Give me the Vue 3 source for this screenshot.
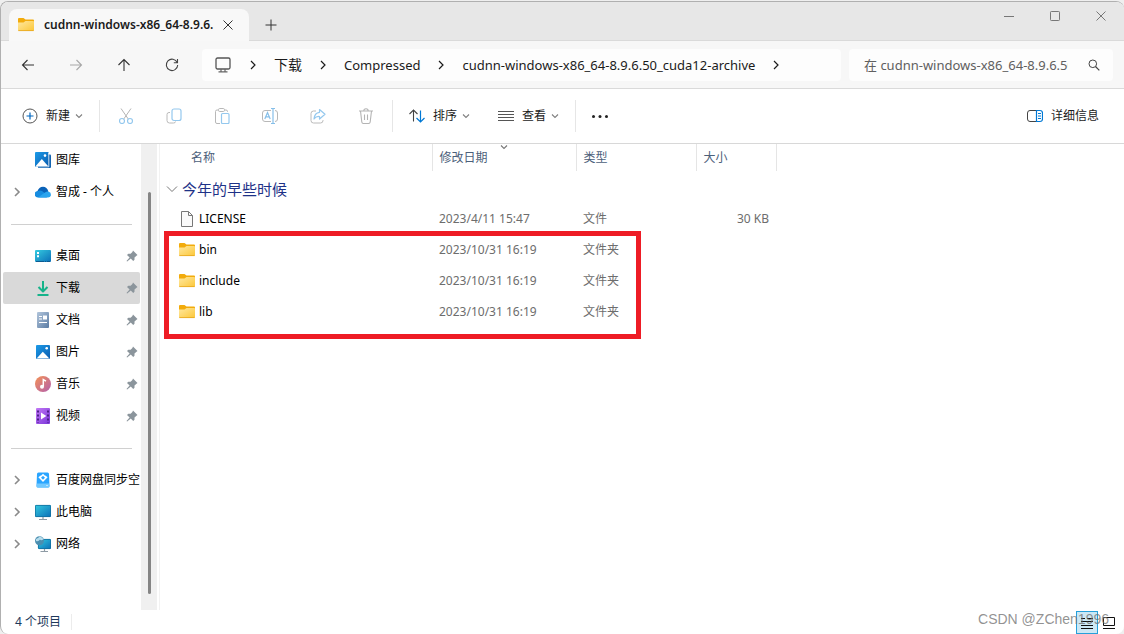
<script setup>
const quickItems = [
  { label: '图库', icon: 'gallery' },
  { label: '智成 - 个人', icon: 'cloud', expandable: true },
  { divider: true },
  { label: '桌面', icon: 'desktop', pinned: true },
  { label: '下载', icon: 'download', pinned: true, active: true },
  { label: '文档', icon: 'document', pinned: true },
  { label: '图片', icon: 'picture', pinned: true },
  { label: '音乐', icon: 'music', pinned: true },
  { label: '视频', icon: 'video', pinned: true },
  { divider: true },
  { label: '百度网盘同步空', icon: 'baidu', expandable: true },
  { label: '此电脑', icon: 'computer', expandable: true },
  { label: '网络', icon: 'network', expandable: true },
]

const crumbs = ['下载', 'Compressed', 'cudnn-windows-x86_64-8.9.6.50_cuda12-archive']

const fileActions = [
  { icon: 'cut', label: '剪切' },
  { icon: 'copy', label: '复制' },
  { icon: 'paste', label: '粘贴' },
  { icon: 'rename', label: '重命名' },
  { icon: 'share', label: '共享' },
  { icon: 'trash', label: '删除' },
]

const files = [
  { name: 'LICENSE', icon: 'file', date: '2023/4/11 15:47', type: '文件', size: '30 KB' },
  { name: 'bin', icon: 'folder', date: '2023/10/31 16:19', type: '文件夹', size: '' },
  { name: 'include', icon: 'folder', date: '2023/10/31 16:19', type: '文件夹', size: '' },
  { name: 'lib', icon: 'folder', date: '2023/10/31 16:19', type: '文件夹', size: '' },
]
</script>

<template>
  <div class="desktop">
    <svg class="sprite" aria-hidden="true">
      <defs>
        <linearGradient id="g-folder" x1="0" y1="0" x2="1" y2="1">
          <stop offset="0" stop-color="#ffe8a0" /><stop offset="1" stop-color="#fcc738" />
        </linearGradient>
        <linearGradient id="g-blue" x1="0" y1="0" x2="1" y2="1">
          <stop offset="0" stop-color="#1c9be8" /><stop offset="1" stop-color="#0a5cb0" />
        </linearGradient>
        <linearGradient id="g-teal" x1="0" y1="0" x2="1" y2="1">
          <stop offset="0" stop-color="#35cbe0" /><stop offset="1" stop-color="#0b6fb8" />
        </linearGradient>
        <linearGradient id="g-doc" x1="0" y1="0" x2="1" y2="1">
          <stop offset="0" stop-color="#b3c6dc" /><stop offset="1" stop-color="#5a7ba3" />
        </linearGradient>
        <linearGradient id="g-music" x1="0" y1="0" x2="1" y2="1">
          <stop offset="0" stop-color="#f59254" /><stop offset="1" stop-color="#b25fae" />
        </linearGradient>
        <linearGradient id="g-video" x1="0" y1="0" x2="1" y2="1">
          <stop offset="0" stop-color="#c278f5" /><stop offset="1" stop-color="#7a35d8" />
        </linearGradient>
      </defs>
      <symbol id="folder" viewBox="0 0 16 16">
        <path d="M0 2Q0 1 1 1H5.5L7.5 2.5H15Q16 2.5 16 3.5V9H0Z" fill="#f2ab0c" />
        <path d="M0 5.500H5.500L7.500 4H15.200Q16 4 16 5V13Q16 14 15 14H1Q0 14 0 13Z" fill="url(#g-folder)" />
        <path d="M.3 13.600H15.700" stroke="#e6a51a" stroke-width=".8" />
      </symbol>
      <symbol id="file" viewBox="0 0 16 16">
        <path d="M2.500.500H9.500L13.500 4.500V15.500H2.500Z" fill="#fafafa" stroke="#787878" />
        <path d="M9.500.500V4.500H13.500" fill="none" stroke="#787878" />
      </symbol>
      <symbol id="gallery" viewBox="0 0 16 16">
        <path d="M3 2.5H15Q16 2.5 16 3.5V15Q16 16 15 16H3Z" fill="#1263b0" />
        <path d="M0 1Q0 0 1 0H13.5V14.5H0Z" fill="url(#g-blue)" />
        <path d="M13.8 1V14.8H1" stroke="#fff" stroke-width=".8" fill="none" />
        <path d="M.8 14L6.8 7L13 14Z" fill="#fff" /><circle cx="10" cy="3.6" r="1.3" fill="#fff" />
      </symbol>
      <symbol id="cloud" viewBox="0 0 16 16">
        <path d="M2 8Q4 2.8 8 2.8Q12 2.8 13.4 7.5L9 11Z" fill="#0a62b8" />
        <path d="M3 13.4A3.2 3.2 0 0 1 2.8 7Q6 5.6 9 8.5L12 13.4Z" fill="#168ce0" />
        <path d="M3 13.4L10 8.4Q13 6.4 15 8.6Q16.2 10 15.8 11.7Q15.2 13.4 13 13.4Z" fill="#2aa4ee" />
      </symbol>
      <symbol id="desktop" viewBox="0 0 16 16">
        <rect y="2" width="16" height="12" rx="1" fill="url(#g-teal)" />
        <path d="M2 4H4V6H2ZM2 7.2H4V9.2H2Z" fill="#fff" />
        <path d="M1 13.5H15" stroke="#0d5b90" stroke-dasharray="8 1 1 1" />
      </symbol>
      <symbol id="download" viewBox="0 0 16 16">
        <path d="M8 1V11M3.5 7L8 11.5L12.5 7M2.5 15H13.5" fill="none" stroke="#16b38a" stroke-width="2" stroke-linejoin="round" />
      </symbol>
      <symbol id="document" viewBox="0 0 16 16">
        <rect x="2" width="12" height="16" rx="1" fill="url(#g-doc)" />
        <path d="M4 4.500H7M4 7H7M4 10.500H12" stroke="#fff" stroke-width="1.200" />
        <path d="M8 3.500H12V7.500H8Z" fill="#fff" />
      </symbol>
      <symbol id="picture" viewBox="0 0 16 16">
        <rect x="1" y="1" width="14" height="14" rx="1" fill="url(#g-blue)" />
        <path d="M1.6 14.5L7.8 7.8L14.4 14.5Z" fill="#fff" /><circle cx="11.7" cy="4.3" r="1.3" fill="#fff" />
      </symbol>
      <symbol id="music" viewBox="0 0 16 16">
        <circle cx="8" cy="8" r="8" fill="url(#g-music)" />
        <circle cx="7" cy="10.8" r="2" fill="#fff" /><path d="M8.3 10.5V3.6L11 5.2" stroke="#fff" stroke-width="1.5" fill="none" />
      </symbol>
      <symbol id="video" viewBox="0 0 16 16">
        <rect x="1" width="14" height="16" rx="1" fill="url(#g-video)" />
        <path d="M3 2.5V15M13 2.5V15" stroke="#4d2087" stroke-width="2" stroke-dasharray="2 2" />
        <path d="M6 4.5V11.5L11.3 8Z" fill="#fff" />
      </symbol>
      <symbol id="baidu" viewBox="0 0 16 16">
        <path d="M2 2Q2 .5 3.5 .5H12.5Q14 .5 14 2L14.5 14Q14.5 15.5 13 15.5H3Q1.5 15.5 1.5 14Z" fill="#2aa5ff" />
        <path d="M2 11.5H14L14.5 14Q14.5 15.5 13 15.5H3Q1.5 15.5 1.5 14Z" fill="#70c8ff" />
        <path d="M8 2.8L11 5.8L8 8.8L5 5.8Z" fill="none" stroke="#fff" stroke-width="1.6" />
        <path d="M3.8 5.8L6 4M12.2 5.8L10 4" stroke="#fff" stroke-width="1.2" />
        <path d="M11.5 13.5H12.5" stroke="#fff" />
      </symbol>
      <symbol id="computer" viewBox="0 0 16 16">
        <rect y="1" width="16" height="12" rx="1" fill="url(#g-teal)" />
        <path d="M8 13V15.5M4 15.5H12" stroke="#8e9ba5" stroke-width="1.2" />
        <rect x=".4" y="1.4" width="15.2" height="11.2" rx=".8" fill="none" stroke="#136f9d" stroke-width=".8" />
      </symbol>
      <symbol id="network" viewBox="0 0 16 16">
        <rect x="3" y="3" width="13" height="10" rx="1" fill="url(#g-teal)" />
        <rect x="3.400" y="3.400" width="12.200" height="9.200" rx=".8" fill="none" stroke="#136f9d" stroke-width=".8" />
        <path d="M9.500 13V15.500M5.500 15.500H13" stroke="#8e9ba5" stroke-width="1.2" />
        <circle cx="4.500" cy="4.800" r="4.500" fill="#4b8eb0" />
        <path d="M1 3Q4 2 4.500 .6Q7.500 1 8.500 3.300Q6 5 5 3.600Q3.500 6 1 5Z" fill="#b5dcec" />
      </symbol>
      <symbol id="pin" viewBox="0 0 12 12">
        <path d="M7 .5L11.5 5L10.500 5.800L8.500 7.600V9.800L7.200 11L4.800 8.600L1.200 11.600L.5 11L3.600 7.400L1 5L2.300 3.700H4.600L6.400 2Z" fill="#8b959c" />
      </symbol>
      <symbol id="chevron-right" viewBox="0 0 10 10">
        <path d="M3 1L7 5L3 9" fill="none" stroke="currentColor" stroke-width="1.2" />
      </symbol>
      <symbol id="chevron-bold" viewBox="0 0 10 10">
        <path d="M3 1L7 5L3 9" fill="none" stroke="currentColor" stroke-width="1.6" />
      </symbol>
      <symbol id="chevron-down" viewBox="0 0 10 10">
        <path d="M2 3.500L5 6.500L8 3.500" fill="none" stroke="currentColor" stroke-width="1.1" />
      </symbol>
      <symbol id="cut" viewBox="0 0 16 16">
        <path d="M3 .5L10.4 11.2M13 .5L5.6 11.2" stroke="#b4b4b4" fill="none" />
        <circle cx="4" cy="13" r="2.5" stroke="#94c8ee" fill="none" stroke-width="1.2" /><circle cx="12" cy="13" r="2.5" stroke="#94c8ee" fill="none" stroke-width="1.2" />
      </symbol>
      <symbol id="copy" viewBox="0 0 16 16">
        <path d="M4 4.5H3Q1 4.5 1 6.5V12.5Q1 15 3.5 15H7.5Q9.5 15 9.5 13.5" fill="none" stroke="#bababa" />
        <rect x="6" y="1" width="9" height="11.5" rx="2" fill="none" stroke="#94c8ee" stroke-width="1.2" />
      </symbol>
      <symbol id="paste" viewBox="0 0 16 16">
        <path d="M6 15.5H3Q1.5 15.5 1.5 14V3.5Q1.5 2 3 2H4.5M10.5 2H12Q13.5 2 13.5 3.5V4" fill="none" stroke="#b8b8b8" />
        <rect x="4.5" y=".5" width="6" height="3" rx="1.2" fill="none" stroke="#b8b8b8" />
        <rect x="7.5" y="5.5" width="7.5" height="10" rx="1" fill="none" stroke="#94c8ee" stroke-width="1.2" />
      </symbol>
      <symbol id="rename" viewBox="0 0 16 16">
        <path d="M9 2.5H3Q.5 2.5 .5 5V11Q.5 13.5 3 13.5H9M13 2.5Q15.5 2.5 15.5 5V11Q15.5 13.5 13 13.5" fill="none" stroke="#b8b8b8" />
        <path d="M2.8 11L5.5 4.5L8.2 11M3.8 8.8H7.2M11 .5V15.5M9 .5H13M9 15.5H13" fill="none" stroke="#86bfe9" stroke-width="1.2" />
      </symbol>
      <symbol id="share" viewBox="0 0 16 16">
        <path d="M6 3H3.5Q1 3 1 5.5V12.5Q1 15 3.5 15H10.5Q13 15 13 12.5V12" fill="none" stroke="#bababa" />
        <path d="M9.5 1.5L15 6.3L9.5 11V8.5Q6 8.2 4 11Q4.5 4.8 9.5 4.3Z" fill="none" stroke="#94c8ee" stroke-width="1.2" stroke-linejoin="round" />
      </symbol>
      <symbol id="trash" viewBox="0 0 16 16">
        <path d="M1 3H15M2.5 3L3.8 14Q4 15.5 5.5 15.5H10.5Q12 15.5 12.2 14L13.5 3M5.8 3Q5.8 .7 8 .7Q10.2 .7 10.2 3M6.5 6.5V12M9.5 6.5V12" fill="none" stroke="#b4b4b4" stroke-width="1.1" />
      </symbol>
      <symbol id="close" viewBox="0 0 12 12">
        <path d="M1.5 1.5L10.5 10.5M10.5 1.5L1.5 10.5" stroke="currentColor" fill="none" />
      </symbol>
    </svg>

    <div class="window">
      <header class="titlebar">
        <div class="tab">
          <svg class="i16"><use href="#folder" /></svg>
          <span class="tab-title">cudnn-windows-x86_64-8.9.6.</span>
          <button class="tab-close" aria-label="关闭标签页"><svg class="i12"><use href="#close" /></svg></button>
        </div>
        <button class="new-tab" aria-label="新标签页">
          <svg class="i12" viewBox="0 0 12 12"><path d="M6 .5V11.5M.5 6H11.5" stroke="#333" /></svg>
        </button>
        <div class="win-controls">
          <button aria-label="最小化"><svg class="i12" viewBox="0 0 12 12"><path d="M1 6.5H11" stroke="currentColor" /></svg></button>
          <button aria-label="最大化"><svg class="i12" viewBox="0 0 12 12"><rect x="1.5" y="1.5" width="9" height="9" rx=".8" fill="none" stroke="currentColor" /></svg></button>
          <button aria-label="关闭"><svg class="i12"><use href="#close" /></svg></button>
        </div>
      </header>

      <div class="addressbar">
        <div class="nav">
          <button aria-label="后退"><svg class="i14" viewBox="0 0 14 14"><path d="M13 7H1.5M6.5 2L1.5 7L6.5 12" fill="none" stroke="#333" stroke-width="1.1" /></svg></button>
          <button aria-label="前进" disabled><svg class="i14" viewBox="0 0 14 14"><path d="M1 7H12.5M7.5 2L12.5 7L7.5 12" fill="none" stroke="#a8a8a8" stroke-width="1.1" /></svg></button>
          <button aria-label="向上"><svg class="i14" viewBox="0 0 14 14"><path d="M7 13V1.5M1.5 7L7 1.5L12.5 7" fill="none" stroke="#333" stroke-width="1.1" /></svg></button>
          <button aria-label="刷新"><svg class="i14" viewBox="0 0 14 14"><path d="M12.2 4.5A5.7 5.7 0 1 0 12.7 7M12.5 1V4.7H8.8" fill="none" stroke="#444" stroke-width="1.1" /></svg></button>
        </div>
        <nav class="crumbs" aria-label="路径">
          <svg class="i16 monitor" viewBox="0 0 16 16"><rect x="1" y="1" width="14" height="11" rx="1.5" fill="none" stroke="#555" stroke-width="1.3" /><path d="M6 12V14.500M10 12V14.500M3.500 14.800H12.500" stroke="#666" stroke-width="1.2" /></svg>
          <svg class="i10 sep"><use href="#chevron-right" /></svg>
          <template v-for="crumb in crumbs" :key="crumb">
            <button class="crumb">{{ crumb }}</button>
            <svg class="i10 sep"><use href="#chevron-right" /></svg>
          </template>
        </nav>
        <div class="search">
          <input type="text" aria-label="搜索" placeholder="在 cudnn-windows-x86_64-8.9.6.50_cuda12-archive 中搜索" />
          <svg class="i12" viewBox="0 0 12 12"><circle cx="4.8" cy="4.8" r="3.8" fill="none" stroke="#444" /><path d="M7.5 7.5L11.3 11.3" stroke="#444" stroke-width="1.2" /></svg>
        </div>
      </div>

      <div class="toolbar">
        <button class="tool new">
          <svg class="i16" viewBox="0 0 16 16"><circle cx="8" cy="8" r="7" fill="none" stroke="#555" /><path d="M8 4.5V11.5M4.5 8H11.5" stroke="#0067c0" stroke-width="1.2" /></svg>
          <span>新建</span>
          <svg class="i10 caret"><use href="#chevron-down" /></svg>
        </button>
        <i class="rule"></i>
        <div class="actions">
          <button v-for="a in fileActions" :key="a.icon" :aria-label="a.label" disabled>
            <svg class="i16"><use :href="'#' + a.icon" /></svg>
          </button>
        </div>
        <i class="rule"></i>
        <button class="tool sort">
          <svg class="i16" viewBox="0 0 16 16"><path d="M4.5 13.5V2M.5 6L4.5 2L8.5 6" fill="none" stroke="#444" stroke-width="1.1" /><path d="M11.5 2.5V14M7.5 10L11.5 14L15.5 10" fill="none" stroke="#0078d4" stroke-width="1.2" /></svg>
          <span>排序</span>
          <svg class="i10 caret"><use href="#chevron-down" /></svg>
        </button>
        <button class="tool view">
          <svg class="i16" viewBox="0 0 16 16"><path d="M0 3.500H16M0 6.500H16M0 9.500H16M0 12.500H16" stroke="#555" /></svg>
          <span>查看</span>
          <svg class="i10 caret"><use href="#chevron-down" /></svg>
        </button>
        <i class="rule"></i>
        <button class="more" aria-label="查看更多"><svg class="i16" viewBox="0 0 16 16"><circle cx="1.500" cy="8.500" r="1.500" fill="#222" /><circle cx="8" cy="8.500" r="1.500" fill="#222" /><circle cx="14.500" cy="8.500" r="1.500" fill="#222" /></svg></button>
        <button class="tool details">
          <svg class="i16" viewBox="0 0 16 16"><path d="M9 2.500H3Q.5 2.500 .5 5V11Q.5 13.500 3 13.500H9" fill="none" stroke="#444" /><path d="M9.500 2.500H13Q15.500 2.500 15.500 5V11Q15.500 13.500 13 13.500H9.500ZM11 5.500H14M11 8H14M11 10.500H14" fill="none" stroke="#0078d4" stroke-width="1.2" /></svg>
          <span>详细信息</span>
        </button>
      </div>

      <div class="body">
        <aside class="sidebar">
          <ul>
            <li v-for="(item, n) in quickItems" :key="n">
              <hr v-if="item.divider" />
              <a v-else href="#" :class="{ active: item.active }">
                <span class="expander"><svg v-if="item.expandable" class="i10"><use href="#chevron-bold" /></svg></span>
                <svg class="i16"><use :href="'#' + item.icon" /></svg>
                <span class="label">{{ item.label }}</span>
                <svg v-if="item.pinned" class="i12"><use href="#pin" /></svg>
              </a>
            </li>
          </ul>
        </aside>
        <div class="track"><div class="thumb"></div></div>
        <main class="listing">
          <table>
            <colgroup><col class="c-name" /><col class="c-date" /><col class="c-type" /><col class="c-size" /><col /></colgroup>
            <thead>
              <tr>
                <th scope="col" class="name-head">名称</th>
                <th scope="col" class="sorted">修改日期<svg class="i10 sort-mark"><use href="#chevron-down" /></svg></th>
                <th scope="col">类型</th>
                <th scope="col">大小</th>
                <td></td>
              </tr>
            </thead>
            <tbody>
              <tr class="group">
                <th colspan="5" scope="rowgroup">
                  <button><svg class="i12" viewBox="0 0 12 12"><path d="M1 3.500L6 8.500L11 3.500" fill="none" stroke="#777" /></svg>今年的早些时候</button>
                </th>
              </tr>
              <tr v-for="f in files" :key="f.name">
                <td class="name"><span><svg class="i16"><use :href="'#' + f.icon" /></svg>{{ f.name }}</span></td>
                <td>{{ f.date }}</td>
                <td>{{ f.type }}</td>
                <td class="size">{{ f.size }}</td>
                <td></td>
              </tr>
            </tbody>
          </table>
          <div class="highlight"></div>
        </main>
      </div>

      <footer class="status">
        <span class="count">4 个项目</span>
        <button class="mode on" aria-label="详细信息视图"><svg class="i16" viewBox="0 0 16 16"><path d="M2 3.500H6M8 3.500H14M2 6.500H14M2 10.500H14M2 13.500H14" stroke="#111" /></svg></button>
        <button class="mode" aria-label="大图标视图"><svg class="i16" viewBox="0 0 16 16"><path d="M2.500 2.500H13.500V10.500H2.500Z" fill="none" stroke="#111" /><path d="M2 13.500H14" stroke="#111" /></svg></button>
      </footer>
    </div>
    <div class="watermark">CSDN @ZChen1996</div>
  </div>
</template>

<style>
html, body { margin: 0; background: #efefef; }
</style>

<style scoped>
* { box-sizing: border-box; }
.desktop { position: relative; padding-top: 1px; font: 12px/16px "Noto Sans", "Noto Sans CJK SC", sans-serif; color: #1b1b1b; }
.sprite { position: absolute; width: 0; height: 0; }
svg { flex: none; display: block; }
.i10 { width: 10px; height: 10px; }
.i12 { width: 12px; height: 12px; }
.i14 { width: 14px; height: 14px; }
.i16 { width: 16px; height: 16px; }
button { font: inherit; color: inherit; background: none; border: 0; padding: 0; display: flex; align-items: center; justify-content: center; }
.window { min-height: calc(100vh - 1px); display: flex; flex-direction: column; background: #fff; border: 1px solid #b0b0b0; border-bottom: 0; border-right: 0; border-radius: 8px; overflow: hidden; }
.titlebar { height: 39px; display: flex; background: #e7e7e7; border-bottom: 1px solid #dadada; padding-left: 8px; }
.tab { width: 240px; height: 32px; margin-top: 7px; padding: 0 11px 0 9px; display: flex; align-items: center; background: #f8f8f8; border-radius: 8px 8px 0 0; }
.tab-title { flex: 1; margin-left: 10px; font-weight: 600; white-space: nowrap; }
.tab-close { width: 20px; height: 20px; color: #333; }
.new-tab { width: 32px; height: 32px; margin: 7px 0 0 6px; }
.win-controls { margin-left: auto; display: flex; height: 28px; color: #777; }
.win-controls button { width: 46px; }
.addressbar { height: 48px; display: flex; align-items: center; background: #f7f7f7; border-bottom: 1px solid #dadada; padding-right: 11px; font-size: 13px; }
.nav { display: flex; padding-left: 3px; width: 201px; }
.nav button { width: 48px; height: 32px; }
.crumbs, .search { height: 32px; background: #fdfdfd; border-radius: 4px; display: flex; align-items: center; }
.crumbs { flex: 1; min-width: 0; padding-left: 13px; overflow: hidden; }
.crumb { white-space: nowrap; margin: 0 16px; }
.crumb:first-of-type { font-size: 14px; }
.monitor + .sep { margin-left: 17px; }
.search { width: 264px; margin-left: 8px; padding: 0 13px 0 15px; gap: 20px; }
.search input { flex: 1; min-width: 0; border: 0; padding: 0; background: none; font: inherit; outline: 0; }
.search input::placeholder { color: #606060; }
.toolbar { height: 55px; display: flex; align-items: center; border-bottom: 1px solid #d8d8d8; }
.tool { height: 32px; gap: 8px; }
.new { margin: 0 15px 0 21px; }
.caret { color: #808080; margin-left: -4px; }
.rule { width: 1px; height: 32px; background: #e6e6e6; }
.actions { display: flex; padding-left: 2px; }
.actions button { width: 48px; height: 32px; }
.actions + .rule { margin-left: 2px; }
.sort { margin-left: 16px; }
.view { margin: 0 15px 0 27px; }
.more { margin-left: 16px; }
.details { margin: 0 25px 0 auto; }
.body { flex: 1; display: flex; }
.sidebar { width: 140px; padding: 0 1px 0 2px; }
ul { list-style: none; margin: 0; padding: 0; }
li { height: 32px; display: flex; align-items: center; }
hr { flex: 1; margin: 0 8px; border: 0; height: 1px; background: #d0d0d0; }
li a { flex: 1; min-width: 0; height: 32px; display: flex; align-items: center; color: #000; text-decoration: none; border-radius: 2px; }
li a.active { background: #d9d9d9; }
.expander { width: 23px; margin-left: 9px; color: #8a8a8a; }
.label { flex: 1; margin-left: 5px; white-space: nowrap; }
.label + svg { margin-right: 2px; }
.track { width: 16px; background: #f0f0f0; padding: 48px 6px 16px 7px; display: flex; }
.thumb { flex: 1; background: #858585; border-radius: 2px; }
.listing { flex: 1; min-width: 0; position: relative; border-left: 1px solid #f2f2f2; margin-left: 2px; }
table { width: 100%; border-collapse: collapse; table-layout: fixed; color: #6d6d6d; }
.c-name { width: 272px; }
.c-date { width: 144px; }
.c-type { width: 120px; }
.c-size { width: 80px; }
th, td { padding: 0 7px; text-align: left; font-weight: 400; height: 31px; white-space: nowrap; }
thead th { height: 27px; color: #4c607a; border-right: 1px solid #e5e5e5; }
thead td { height: 27px; }
thead .name-head { padding-left: 31px; }
.sorted { position: relative; }
.sort-mark { position: absolute; top: -2px; left: 50%; margin-left: -5px; color: #777; }
.group th { height: 32px; padding: 4px 0 0 6px; color: #1e3287; font-size: 15px; }
.group button { gap: 4px; line-height: 20px; }
.name span { display: flex; align-items: center; gap: 4px; color: #000; padding-left: 12px; }
.size { text-align: right; }
.highlight { position: absolute; left: 4px; top: 87px; width: 477px; height: 108px; border: 5px solid #ee1c25; }
.status { height: 24px; display: flex; align-items: flex-end; padding: 0 4px 0 14px; color: #1e395b; }
.count { margin: 0 auto 4px 0; padding-right: 10px; border-right: 1px solid #ececec; }
.mode { width: 22px; height: 23px; }
.mode.on { background: #cce8f5; border: 1px solid #26a0da; }
.watermark { position: absolute; right: 15px; bottom: 6px; font: 14px/18px "Liberation Sans", sans-serif; color: rgba(110, 110, 110, .75); }
</style>
